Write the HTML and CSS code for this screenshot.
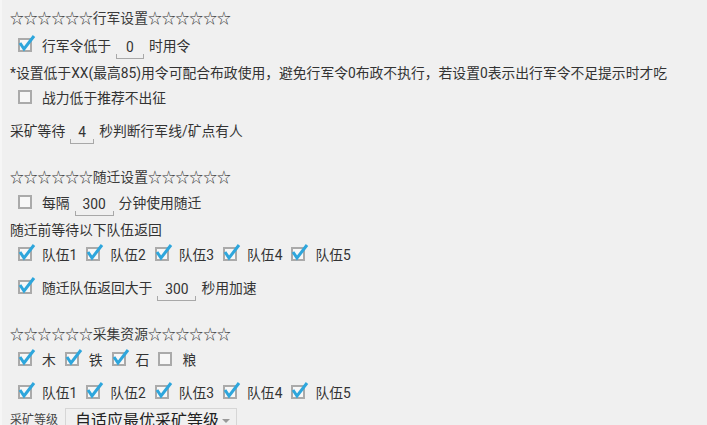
FILE: index.html
```html
<!DOCTYPE html>
<html lang="zh">
<head>
  <meta charset="UTF-8" />
  <title>设置</title>
  <link rel="stylesheet" href="styles.css">
</head>
<body>
  <div class="page">
    <div class="title">☆☆☆☆☆☆行军设置☆☆☆☆☆☆</div>

    <div class="row gap-m indent">
      <span class="box on"><svg viewBox="0 0 20 20"><path d="M2 9 L6 15 L16 2"/></svg></span>
      <span class="label">行军令低于</span>
      <span class="field w28">0</span>
      <span>时用令</span>
    </div>

    <div class="row gap-m">*设置低于XX(最高85)用令可配合布政使用，避免行军令0布政不执行，若设置0表示出行军令不足提示时才吃</div>

    <div class="row gap-s indent">
      <span class="box"></span>
      <span class="label">战力低于推荐不出征</span>
    </div>

    <div class="row gap-l">
      <span>采矿等待</span>
      <span class="field w24">4</span>
      <span>秒判断行军线/矿点有人</span>
    </div>

    <div class="title section">☆☆☆☆☆☆随迁设置☆☆☆☆☆☆</div>

    <div class="row gap-s indent">
      <span class="box"></span>
      <span class="label">每隔</span>
      <span class="field w39">300</span>
      <span>分钟使用随迁</span>
    </div>

    <div class="row gap-m">随迁前等待以下队伍返回</div>

    <div class="row gap-s indent">
      <span class="opt"><span class="box on"><svg viewBox="0 0 20 20"><path d="M2 9 L6 15 L16 2"/></svg></span>队伍1</span>
      <span class="opt"><span class="box on"><svg viewBox="0 0 20 20"><path d="M2 9 L6 15 L16 2"/></svg></span>队伍2</span>
      <span class="opt"><span class="box on"><svg viewBox="0 0 20 20"><path d="M2 9 L6 15 L16 2"/></svg></span>队伍3</span>
      <span class="opt"><span class="box on"><svg viewBox="0 0 20 20"><path d="M2 9 L6 15 L16 2"/></svg></span>队伍4</span>
      <span class="opt"><span class="box on"><svg viewBox="0 0 20 20"><path d="M2 9 L6 15 L16 2"/></svg></span>队伍5</span>
    </div>

    <div class="row gap-l indent">
      <span class="box on"><svg viewBox="0 0 20 20"><path d="M2 9 L6 15 L16 2"/></svg></span>
      <span class="label">随迁队伍返回大于</span>
      <span class="field w39">300</span>
      <span>秒用加速</span>
    </div>

    <div class="title section">☆☆☆☆☆☆采集资源☆☆☆☆☆☆</div>

    <div class="row gap-s indent">
      <span class="opt"><span class="box on"><svg viewBox="0 0 20 20"><path d="M2 9 L6 15 L16 2"/></svg></span>木</span>
      <span class="opt"><span class="box on"><svg viewBox="0 0 20 20"><path d="M2 9 L6 15 L16 2"/></svg></span>铁</span>
      <span class="opt"><span class="box on"><svg viewBox="0 0 20 20"><path d="M2 9 L6 15 L16 2"/></svg></span>石</span>
      <span class="opt"><span class="box"></span>粮</span>
    </div>

    <div class="row gap-l indent">
      <span class="opt"><span class="box on"><svg viewBox="0 0 20 20"><path d="M2 9 L6 15 L16 2"/></svg></span>队伍1</span>
      <span class="opt"><span class="box on"><svg viewBox="0 0 20 20"><path d="M2 9 L6 15 L16 2"/></svg></span>队伍2</span>
      <span class="opt"><span class="box on"><svg viewBox="0 0 20 20"><path d="M2 9 L6 15 L16 2"/></svg></span>队伍3</span>
      <span class="opt"><span class="box on"><svg viewBox="0 0 20 20"><path d="M2 9 L6 15 L16 2"/></svg></span>队伍4</span>
      <span class="opt"><span class="box on"><svg viewBox="0 0 20 20"><path d="M2 9 L6 15 L16 2"/></svg></span>队伍5</span>
    </div>

    <div class="row bottom">
      <span class="small-label">采矿等级</span>
      <span class="spinner">自适应最优采矿等级<span class="arrow"></span></span>
    </div>
  </div>
</body>
</html>
```

FILE: styles.css
```css
* {
  box-sizing: border-box;
  margin: 0;
  padding: 0;
}

body {
  font-family: Roboto, "Noto Sans CJK SC", sans-serif;
  font-size: 13.8px;
  color: #333;
  background: #f0f0f0;
  height: 100vh;
  overflow: hidden;
  border-left: 2px solid #f6f6f6;
}

.page {
  padding: 8px 0 0 8px;
}

.title {
  height: 20px;
  line-height: 20px;
  color: #3a3a3a;
  white-space: nowrap;
}

.title.section {
  margin-top: 27px;
}

.row {
  height: 20px;
  display: flex;
  align-items: center;
  white-space: nowrap;
}

.gap-s { margin-top: 5px; }
.gap-m { margin-top: 7px; }
.gap-l { margin-top: 13px; }

.indent {
  padding-left: 8px;
}

.box {
  position: relative;
  width: 14px;
  height: 14px;
  border: 2px solid #aaa;
  background: #f7f7f7;
  margin-right: 10px;
  flex-shrink: 0;
}

.box svg {
  position: absolute;
  left: -2px;
  top: -6px;
  width: 20px;
  height: 20px;
  overflow: visible;
}

.box svg path {
  fill: none;
  stroke: #2ea6dc;
  stroke-width: 3;
  stroke-linecap: butt;
  stroke-linejoin: miter;
}

.opt {
  display: flex;
  align-items: center;
  margin-right: 9px;
}

.field {
  position: relative;
  display: inline-block;
  height: 22px;
  line-height: 20px;
  margin: 2px 5px 0;
  text-align: center;
  align-self: flex-start;
}

.field::after {
  content: "";
  position: absolute;
  left: 0;
  right: 0;
  bottom: 0;
  height: 4px;
  border: 1px solid #a8a8a8;
  border-top: none;
}

.w24 { width: 24px; }
.w28 { width: 28px; }
.w39 { width: 39px; }

.row.bottom {
  height: auto;
  align-items: flex-start;
  margin-top: 8px;
}

.small-label {
  font-size: 12px;
  line-height: 20px;
  color: #444;
}

.spinner {
  position: relative;
  display: inline-block;
  width: 172px;
  height: 28px;
  margin: -2px 0 0 7px;
  padding: 2px 0 0 9px;
  border: 1px solid #d6d6d6;
  font-size: 16px;
  line-height: 20px;
  color: #222;
}

.arrow {
  position: absolute;
  right: 6px;
  top: 10px;
  width: 0;
  height: 0;
  border-left: 4px solid transparent;
  border-right: 4px solid transparent;
  border-top: 4px solid #999;
}
```
